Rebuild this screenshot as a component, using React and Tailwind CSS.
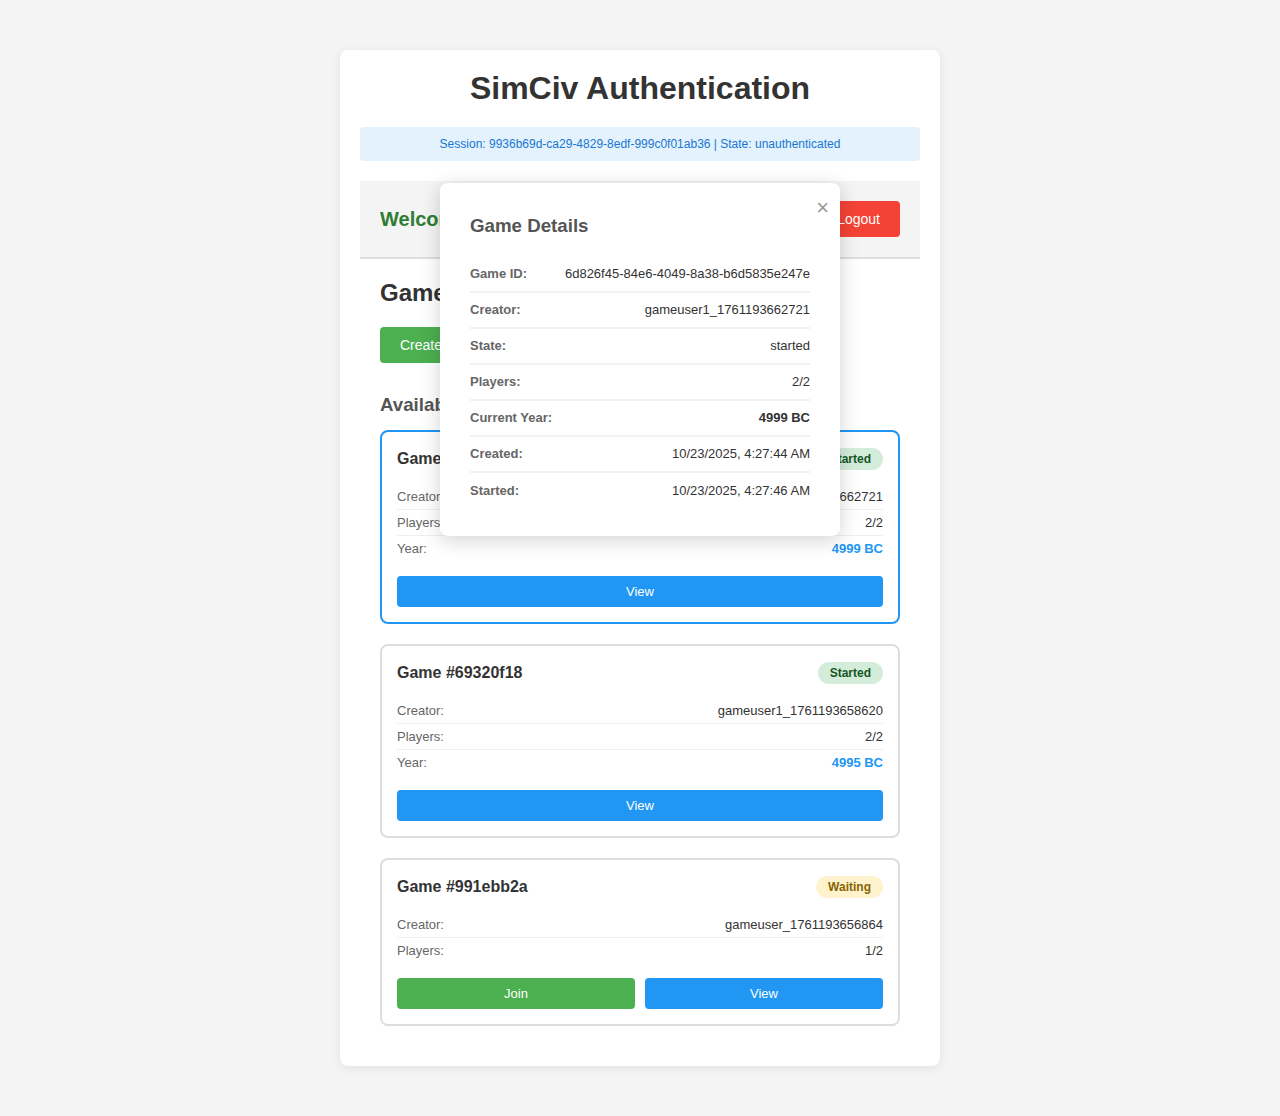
const GAMES = [
  {
    id: '6d826f45',
    state: 'Started',
    creator: 'gameuser1_1761193662721',
    players: '2/2',
    year: '4999 BC',
    selected: true,
  },
  {
    id: '69320f18',
    state: 'Started',
    creator: 'gameuser1_1761193658620',
    players: '2/2',
    year: '4995 BC',
  },
  {
    id: '991ebb2a',
    state: 'Waiting',
    creator: 'gameuser_1761193656864',
    players: '1/2',
    joinable: true,
  },
]

const DETAILS = [
  ['Game ID:', '6d826f45-84e6-4049-8a38-b6d5835e247e'],
  ['Creator:', 'gameuser1_1761193662721'],
  ['State:', 'started'],
  ['Players:', '2/2'],
  ['Current Year:', '4999 BC', true],
  ['Created:', '10/23/2025, 4:27:44 AM'],
  ['Started:', '10/23/2025, 4:27:46 AM'],
]

function Badge({ state }) {
  const cls = state === 'Started'
    ? 'bg-[#d4edda] text-[#155724]'
    : 'bg-[#fff3cd] text-[#856404]'
  return (
    <span className={`rounded-full px-3 h-[22px] flex items-center text-[12px] font-bold ${cls}`}>{state}</span>
  )
}

function Row({ label, value, last, year }) {
  return (
    <div className={`flex justify-between items-center h-[26px] text-[13px] ${last ? '' : 'border-b border-[#eee]'}`}>
      <span className="text-[#666]">{label}</span>
      <span className={year ? 'text-[#2196f3] font-bold' : 'text-[#333]'}>{value}</span>
    </div>
  )
}

function GameCard({ g }) {
  return (
    <div className={`rounded-lg border-2 bg-white p-[15px] ${g.selected ? 'border-[#2196f3]' : 'border-[#ddd]'}`}>
      <div className="flex justify-between items-center h-[22px] mb-[15px] mt-px">
        <h4 className="text-[16px] font-bold text-[#333]">Game #{g.id}</h4>
        <Badge state={g.state} />
      </div>
      <div className="-mt-px">
        <Row label="Creator:" value={g.creator} />
        <Row label="Players:" value={g.players} last={!g.year} />
        {g.year && <Row label="Year:" value={g.year} year last />}
      </div>
      <div className="flex gap-[10px] mt-[14px]">
        {g.joinable && (
          <button className="flex-1 h-[31px] rounded bg-[#4caf50] text-white text-[13px]">Join</button>
        )}
        <button className="flex-1 h-[31px] rounded bg-[#2196f3] text-white text-[13px]">View</button>
      </div>
    </div>
  )
}

export default function App() {
  return (
    <div className="min-h-[1116px] bg-[#f4f4f4] pt-[50px] pb-[50px] font-['Liberation_Sans',Arial,sans-serif]">
      <div className="relative mx-auto w-[600px] bg-white rounded-lg shadow-[0_2px_10px_rgba(0,0,0,0.08)] p-5">
        <h1 className="text-center text-[32px] leading-[37px] font-bold text-[#333] mb-5">SimCiv Authentication</h1>

        <div className="bg-[#e3f2fd] text-[#1976d2] text-[12px] text-center h-[34px] flex items-center justify-center rounded mb-5">
          Session: 9936b69d-ca29-4829-8edf-999c0f01ab36 | State: unauthenticated
        </div>

        {/* Welcome */}
        <div className="bg-[#f4f4f4] border-b-2 border-[#ddd] p-5 flex justify-between items-center">
          <span className="text-[20px] font-bold text-[#2e7d32]">Welcome, gameuser1_1761193662721!</span>
          <button className="bg-[#f44336] text-white text-[14px] h-9 px-5 rounded">Logout</button>
        </div>

        <div className="p-5">
          <h2 className="text-[24px] leading-[28px] font-bold text-[#333] mb-5">Game Lobby</h2>
          <button className="bg-[#4caf50] text-white text-[14px] h-9 px-5 rounded">Create New Game</button>

          <h3 className="mt-[31px] mb-[15px] text-[18.72px] leading-[21px] font-bold text-[#555]">Available Games</h3>
          <div className="flex flex-col gap-5">
            {GAMES.map(g => <GameCard key={g.id} g={g} />)}
          </div>
        </div>

        {/* Game details modal */}
        <div className="absolute left-[100px] top-[133px] w-[400px] bg-white rounded-lg shadow-[0_4px_20px_rgba(0,0,0,0.18)] pt-[32px] px-[30px] pb-[27px]">
          <span className="absolute right-[11px] top-[14px] text-[#999] text-[22px] leading-[22px]">×</span>
          <h3 className="text-[18.72px] leading-[21px] font-bold text-[#555] mb-[21px]">Game Details</h3>
          {DETAILS.map(([label, value, bold], i) => (
            <div
              key={label}
              className={`flex justify-between items-center h-9 text-[13px] ${i < DETAILS.length - 1 ? 'border-b-2 border-[#f2f2f2]' : ''}`}
            >
              <span className="font-bold text-[#666]">{label}</span>
              <span className={bold ? 'font-bold text-[#333]' : 'text-[#333]'}>{value}</span>
            </div>
          ))}
        </div>
      </div>
    </div>
  )
}
